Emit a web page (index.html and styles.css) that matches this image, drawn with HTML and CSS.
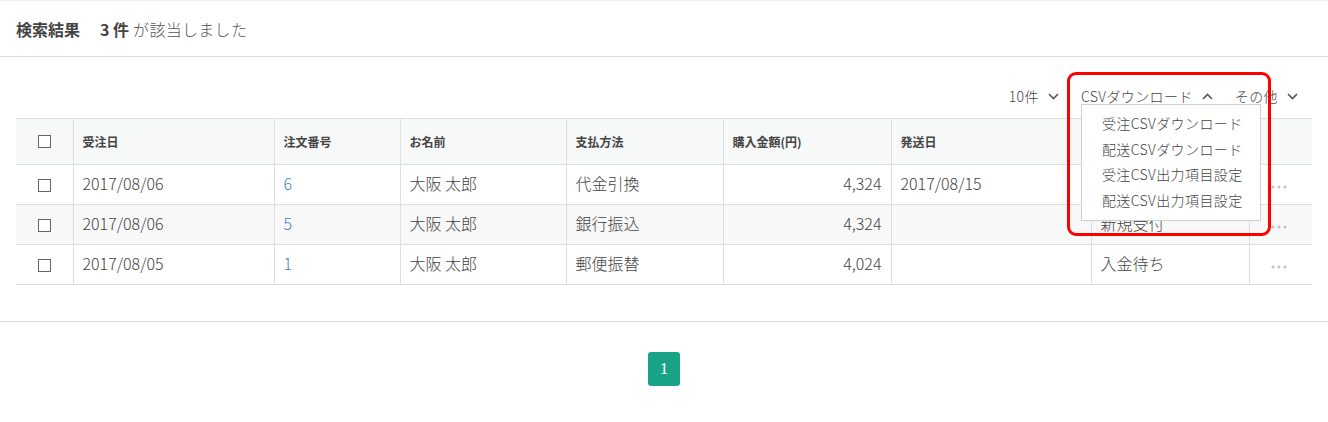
FILE: index.html
```html
<!DOCTYPE html>
<html lang="ja">
<head>
<meta charset="utf-8">
<title>検索結果</title>
<link rel="stylesheet" href="styles.css">
</head>
<body>
<div class="page">
  <div class="result-head">
    <span class="rh-title">検索結果</span>
    <span class="rh-count">3 件</span>
    <span class="rh-text">が該当しました</span>
  </div>

  <div class="content">
    <div class="toolbar">
      <div class="tb-item">
        <span>10件</span>
        <svg class="chev" width="11" height="7" viewBox="0 0 11 7"><polyline points="1,1 5.5,5.5 10,1" fill="none" stroke="#555" stroke-width="1.6"/></svg>
      </div>
      <div class="tb-item tb-dd">
        <span>CSVダウンロード</span>
        <svg class="chev" width="11" height="7" viewBox="0 0 11 7"><polyline points="1,6 5.5,1.5 10,6" fill="none" stroke="#555" stroke-width="1.6"/></svg>
        <div class="dd-menu">
          <div class="dd-item">受注CSVダウンロード</div>
          <div class="dd-item">配送CSVダウンロード</div>
          <div class="dd-item">受注CSV出力項目設定</div>
          <div class="dd-item">配送CSV出力項目設定</div>
        </div>
        <div class="highlight"></div>
      </div>
      <div class="tb-item">
        <span>その他</span>
        <svg class="chev" width="11" height="7" viewBox="0 0 11 7"><polyline points="1,1 5.5,5.5 10,1" fill="none" stroke="#555" stroke-width="1.6"/></svg>
      </div>
    </div>

    <table class="orders">
      <colgroup>
        <col class="c-chk"><col class="c-date"><col class="c-no"><col class="c-name"><col class="c-pay"><col class="c-amt"><col class="c-ship"><col class="c-status"><col class="c-act">
      </colgroup>
      <thead>
        <tr>
          <th class="chk"><span class="box"></span></th>
          <th>受注日</th>
          <th>注文番号</th>
          <th>お名前</th>
          <th>支払方法</th>
          <th>購入金額(円)</th>
          <th>発送日</th>
          <th>対応状況</th>
          <th></th>
        </tr>
      </thead>
      <tbody>
        <tr>
          <td class="chk"><span class="box"></span></td>
          <td>2017/08/06</td>
          <td><a class="link">6</a></td>
          <td>大阪 太郎</td>
          <td>代金引換</td>
          <td class="num">4,324</td>
          <td>2017/08/15</td>
          <td>新規受付</td>
          <td class="act"><svg width="16" height="4" viewBox="0 0 16 4"><circle cx="2" cy="2" r="1.6" fill="#c4c4c4"/><circle cx="8" cy="2" r="1.6" fill="#c4c4c4"/><circle cx="14" cy="2" r="1.6" fill="#c4c4c4"/></svg></td>
        </tr>
        <tr class="alt">
          <td class="chk"><span class="box"></span></td>
          <td>2017/08/06</td>
          <td><a class="link">5</a></td>
          <td>大阪 太郎</td>
          <td>銀行振込</td>
          <td class="num">4,324</td>
          <td></td>
          <td>新規受付</td>
          <td class="act"><svg width="16" height="4" viewBox="0 0 16 4"><circle cx="2" cy="2" r="1.6" fill="#c4c4c4"/><circle cx="8" cy="2" r="1.6" fill="#c4c4c4"/><circle cx="14" cy="2" r="1.6" fill="#c4c4c4"/></svg></td>
        </tr>
        <tr>
          <td class="chk"><span class="box"></span></td>
          <td>2017/08/05</td>
          <td><a class="link">1</a></td>
          <td>大阪 太郎</td>
          <td>郵便振替</td>
          <td class="num">4,024</td>
          <td></td>
          <td>入金待ち</td>
          <td class="act"><svg width="16" height="4" viewBox="0 0 16 4"><circle cx="2" cy="2" r="1.6" fill="#c4c4c4"/><circle cx="8" cy="2" r="1.6" fill="#c4c4c4"/><circle cx="14" cy="2" r="1.6" fill="#c4c4c4"/></svg></td>
        </tr>
      </tbody>
    </table>
  </div>

  <div class="pager-area">
    <span class="page-btn">1</span>
  </div>
</div>
</body>
</html>
```

FILE: styles.css
```css
html, body {
  margin: 0;
  padding: 0;
  background: #fff;
}
body {
  font-family: "Noto Sans CJK JP", "Noto Sans", sans-serif;
  color: #555;
}
.page {
  width: 1328px;
  border-top: 1px solid #eef0f0;
}
.result-head {
  height: 55px;
  display: flex;
  align-items: center;
  padding: 0 16px;
  border-bottom: 1px solid #d9dcdc;
  font-size: 16px;
}
.rh-title {
  font-weight: bold;
  color: #444;
}
.rh-count {
  font-weight: bold;
  color: #444;
  margin-left: 20px;
}
.rh-text {
  color: #555;
  font-weight: 300;
  margin-left: 4px;
  letter-spacing: 0.3px;
}
.content {
  padding: 0 16px;
}
.toolbar {
  display: flex;
  justify-content: flex-end;
  align-items: center;
  height: 24px;
  margin-top: 27px;
  margin-bottom: 10px;
  padding-right: 14px;
  font-size: 14px;
  font-weight: 300;
  letter-spacing: 0.4px;
  color: #444;
}
.tb-item {
  display: flex;
  align-items: center;
  gap: 9px;
  margin-left: 22px;
  height: 24px;
}
.chev {
  display: block;
}
.tb-dd {
  position: relative;
}
.dd-menu {
  position: absolute;
  left: 0;
  top: 20px;
  width: 178px;
  padding: 6px 0 7px;
  background: #fff;
  border: 1px solid #cfcfcf;
  z-index: 2;
}
.dd-item {
  height: 25.5px;
  line-height: 25px;
  padding-left: 20px;
  font-size: 14px;
  font-weight: 300;
  color: #444;
  white-space: nowrap;
}
.highlight {
  position: absolute;
  left: -14px;
  top: -12px;
  width: 204px;
  height: 164px;
  box-sizing: border-box;
  border: 3px solid #f00;
  border-radius: 9px;
  z-index: 3;
}
.orders {
  width: 1296px;
  border-collapse: collapse;
  table-layout: fixed;
  font-size: 16px;
  font-weight: 300;
}
.c-chk { width: 57px; }
.c-date { width: 201px; }
.c-no { width: 126px; }
.c-name { width: 166px; }
.c-pay { width: 157px; }
.c-amt { width: 168px; }
.c-ship { width: 200px; }
.c-status { width: 158px; }
.c-act { width: 63px; }
.orders th,
.orders td {
  border: 1px solid #dcdfdf;
  text-align: left;
  padding: 0 9px;
  white-space: nowrap;
}
.orders td {
  padding-bottom: 3px;
  color: #444;
}
.orders tr > :first-child { border-left: none; }
.orders tr > :last-child { border-right: none; }
.orders thead tr {
  height: 46px;
  background: #f7f8f8;
}
.orders th {
  font-size: 12px;
  font-weight: bold;
  color: #444;
}
.orders tbody tr {
  height: 40px;
}
.orders tbody tr.alt {
  background: #f8f8f8;
}
.orders .chk {
  text-align: center;
  padding: 0;
}
.box {
  display: inline-block;
  width: 11px;
  height: 11px;
  border: 1px solid #666;
  background: #fff;
  vertical-align: middle;
  position: relative;
  top: -2px;
}
.orders td.num {
  text-align: right;
}
.link {
  color: #437ec4;
  text-decoration: none;
}
.orders td.act {
  text-align: center;
  padding: 0;
}
.act svg {
  vertical-align: middle;
  position: relative;
  left: -2px;
}
.pager-area {
  margin-top: 36px;
  border-top: 1px solid #d9dcdc;
  padding-top: 30px;
  display: flex;
  justify-content: center;
  height: 70px;
}
.page-btn {
  width: 32px;
  height: 34px;
  border-radius: 3px;
  background: #1aa487;
  color: #fff;
  font-family: "Liberation Serif", serif;
  font-size: 17px;
  display: flex;
  align-items: center;
  justify-content: center;
}
```
